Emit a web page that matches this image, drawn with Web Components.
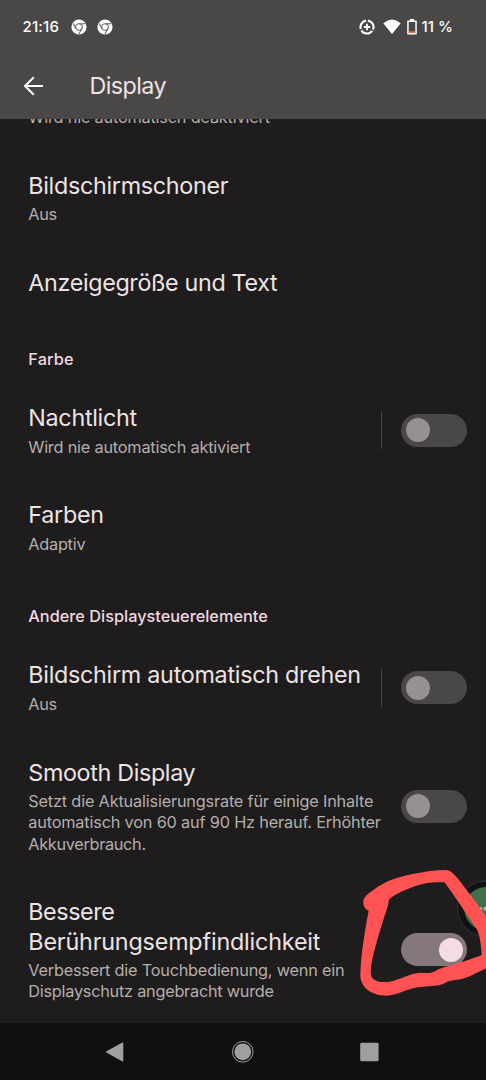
<!DOCTYPE html>
<html lang="de">
<head>
<meta charset="utf-8">
<title>Display</title>
<style>
  html, body {
    margin: 0;
    height: 100%;
    background: #1e1c1d;
  }
  body {
    font-family: Inter, Roboto, "Liberation Sans", sans-serif;
    color: #ede3e4;
    overflow: hidden;
  }
</style>
</head>
<body>

<phone-screen>
  <status-bar slot="top" time="21:16" battery="11 %"></status-bar>
  <app-bar slot="top"><text-line width="76.5">Display</text-line></app-bar>

  <setting-row>
    <text-line slot="summary" width="241.5">Wird nie automatisch deaktiviert</text-line>
  </setting-row>
  <setting-row>
    <text-line width="200">Bildschirmschoner</text-line>
    <text-line slot="summary" width="28.3">Aus</text-line>
  </setting-row>
  <setting-row>
    <text-line width="249">Anzeigegröße und Text</text-line>
  </setting-row>

  <section-title><text-line width="45.5">Farbe</text-line></section-title>
  <setting-row>
    <text-line width="108.5">Nachtlicht</text-line>
    <text-line slot="summary" width="222">Wird nie automatisch aktiviert</text-line>
    <toggle-switch slot="control" divided></toggle-switch>
  </setting-row>
  <setting-row>
    <text-line width="75.5">Farben</text-line>
    <text-line slot="summary" width="57">Adaptiv</text-line>
  </setting-row>

  <section-title><text-line width="239.5">Andere Displaysteuerelemente</text-line></section-title>
  <setting-row>
    <text-line width="332.5">Bildschirm automatisch drehen</text-line>
    <text-line slot="summary" width="28.3">Aus</text-line>
    <toggle-switch slot="control" divided></toggle-switch>
  </setting-row>
  <setting-row>
    <text-line width="167">Smooth Display</text-line>
    <text-line slot="summary" width="345">Setzt die Aktualisierungsrate für einige Inhalte</text-line>
    <text-line slot="summary" width="352.5">automatisch von 60 auf 90 Hz herauf. Erhöhter</text-line>
    <text-line slot="summary" width="117.5">Akkuverbrauch.</text-line>
    <toggle-switch slot="control"></toggle-switch>
  </setting-row>
  <setting-row>
    <text-line width="86">Bessere</text-line>
    <text-line width="292">Berührungsempfindlichkeit</text-line>
    <text-line slot="summary" width="316">Verbessert die Touchbedienung, wenn ein</text-line>
    <text-line slot="summary" width="245.5">Displayschutz angebracht wurde</text-line>
    <toggle-switch slot="control" checked></toggle-switch>
  </setting-row>

  <nav-bar slot="bottom"></nav-bar>
  <marker-drawing slot="overlay"></marker-drawing>
</phone-screen>

<script>
function shadow(el, html) {
  el.attachShadow({ mode: 'open' }).innerHTML = html;
}

class PhoneScreen extends HTMLElement {
  constructor() {
    super();
    shadow(this, `
      <style>
        :host {
          display: flex;
          flex-direction: column;
          position: relative;
          width: 486px;
          height: 1080px;
          overflow: hidden;
          background: #1e1c1d;
        }
        header { height: 119px; background: #494846; flex: none; }
        main { height: 904px; overflow: hidden; flex: none; }
        /* the list is scrolled, its first row is cut by the header */
        .list { margin-top: -37.1px; }
      </style>
      <header><slot name="top"></slot></header>
      <main><div class="list"><slot></slot></div></main>
      <slot name="bottom"></slot>
      <slot name="overlay"></slot>
    `);
  }
}

class StatusBar extends HTMLElement {
  constructor() {
    super();
    const chrome = `
      <svg width="16" height="16" viewBox="0 0 16 16">
        <circle cx="8" cy="8" r="7.6" fill="#fff"/>
        <g fill="none" stroke="#6b6a68" stroke-width="1.1">
          <circle cx="8" cy="8" r="3.3"/>
          <path d="M8 4.7H14.4M5.1 9.6L2.2 4.6M10.9 9.6L7.9 14.9"/>
        </g>
      </svg>`;
    shadow(this, `
      <style>
        :host {
          display: flex;
          align-items: center;
          height: 54px;
          padding: 0 33px 0 22.5px;
          font-size: 15px;
          font-weight: 500;
          line-height: 20px;
          color: #fff;
        }
        svg { display: block; flex: none; }
        .apps { display: flex; gap: 10px; margin-left: 11.5px; flex: 1; }
        .wifi { margin-left: 8px; }
        .battery { margin: 0 4.5px 0 6.5px; }
      </style>
      <text-line width="36.5">${this.getAttribute('time')}</text-line>
      <div class="apps">${chrome}${chrome}</div>
      <svg width="16" height="16" viewBox="0 0 16 16" fill="none" stroke="#fff">
        <path d="M8.9 1.6A6.5 6.5 0 0 1 14 10.6M13.2 11.9A6.5 6.5 0 0 1 2.4 11.4M1.8 10A6.5 6.5 0 0 1 7.1 1.6" stroke-width="2.1"/>
        <path d="M8 4.8V11.2M4.8 8H11.2" stroke-width="1.8"/>
      </svg>
      <svg class="wifi" width="18" height="16" viewBox="0 0 18 16">
        <path d="M.3 4.2Q9-3 17.7 4.2L9 15Z" fill="#fff"/>
      </svg>
      <svg class="battery" width="10" height="16" viewBox="0 0 10 16">
        <path d="M3 0H7V1.5H9Q9.8 1.5 9.8 2.3V14.7Q9.8 15.5 9 15.5H1Q.2 15.5 .2 14.7V2.3Q.2 1.5 1 1.5H3Z" fill="#fff"/>
        <path d="M1.7 3H8.3V14H1.7Z" fill="#494846"/>
        <path d="M1.7 12.3H8.3V14H1.7Z" fill="#e8714a"/>
      </svg>
      <text-line width="31.5">${this.getAttribute('battery')}</text-line>
    `);
  }
}

class AppBar extends HTMLElement {
  constructor() {
    super();
    shadow(this, `
      <style>
        :host {
          display: flex;
          align-items: center;
          gap: 45.5px;
          height: 64px;
          padding-left: 23px;
          font-size: 23.3px;
          line-height: 30px;
        }
        svg { display: block; }
      </style>
      <svg width="21" height="20" viewBox="0 0 21 20" fill="none" stroke="#fff" stroke-width="2">
        <path d="M20 10H2.5M10.8 1.2L2 10L10.8 18.8"/>
      </svg>
      <slot></slot>
    `);
  }
}

// One line of text, tracked so that it takes up the given width
class TextLine extends HTMLElement {
  constructor() {
    super();
    shadow(this, `
      <style>
        :host { display: block; white-space: nowrap; }
      </style>
      <span><slot></slot></span>
    `);
  }

  connectedCallback() {
    const natural = this.shadowRoot.querySelector('span').getBoundingClientRect().width;
    const width = Number(this.getAttribute('width'));
    this.style.letterSpacing = `${(width - natural) / this.textContent.length}px`;
  }
}

class SectionTitle extends HTMLElement {
  constructor() {
    super();
    shadow(this, `
      <style>
        :host {
          display: block;
          padding: 30px 28.3px 12px;
          font-size: 16.3px;
          font-weight: 500;
          line-height: 21px;
          color: #f0d8e0;
        }
      </style>
      <slot></slot>
    `);
  }
}

class SettingRow extends HTMLElement {
  constructor() {
    super();
    shadow(this, `
      <style>
        :host {
          display: flex;
          align-items: center;
          padding: 21.25px 19px 21.25px 28.3px;
        }
        .text { flex: 1; min-width: 0; }
        .title { font-size: 23.3px; line-height: 29.5px; }
        .summary {
          font-size: 16.3px;
          line-height: 21.2px;
          color: #b5afac;
        }
      </style>
      <div class="text">
        <div class="title"><slot></slot></div>
        <div class="summary"><slot name="summary"></slot></div>
      </div>
      <slot name="control"></slot>
    `);
    if (this.querySelector('[slot=summary]')) {
      this.shadowRoot.querySelector('.summary').style.paddingTop = '4px';
    }
  }
}

class ToggleSwitch extends HTMLElement {
  constructor() {
    super();
    shadow(this, `
      <style>
        :host { display: flex; align-items: center; gap: 19px; }
        .track {
          display: flex;
          box-sizing: border-box;
          width: 66px;
          height: 33px;
          padding: 4.5px;
          border-radius: 17px;
          background: #494846;
        }
        .knob { width: 24px; height: 24px; border-radius: 50%; background: #969091; }
        .divider { display: none; width: 1px; height: 38px; background: #494748; }
        :host([divided]) .divider { display: block; }
        :host([checked]) .track { justify-content: flex-end; background: #85787b; }
        :host([checked]) .knob { background: #f4dce4; }
      </style>
      <div class="divider"></div>
      <div class="track"><div class="knob"></div></div>
    `);
  }
}

class NavBar extends HTMLElement {
  constructor() {
    super();
    shadow(this, `
      <style>
        :host {
          display: flex;
          align-items: center;
          justify-content: space-between;
          box-sizing: border-box;
          flex: 1;
          padding: 0 106px 0 104px;
          background: #110f10;
        }
        svg { display: block; fill: #9f9f9f; overflow: visible; }
      </style>
      <svg width="22" height="22" viewBox="0 0 22 22"><path d="M2.4 10.3L18.4 1.5Q19.3 1.2 19.3 2.2V19.8Q19.3 20.8 18.4 20.4L2.4 11.6Q1.7 11 2.4 10.3Z"/></svg>
      <svg width="22" height="22" viewBox="0 0 22 22"><circle cx="11.8" cy="10.8" r="8.4"/><circle cx="11.8" cy="10.8" r="10.3" style="fill:none;stroke:#9f9f9f;stroke-width:1"/></svg>
      <svg width="22" height="22" viewBox="0 0 22 22"><rect x="2.2" y="1.8" width="18.4" height="18.4" rx="1.5"/></svg>
    `);
  }
}

// Floating button at the screen edge and the red pen stroke over it
class MarkerDrawing extends HTMLElement {
  constructor() {
    super();
    shadow(this, `
      <style>
        :host { position: absolute; right: 0; top: 860px; }
        svg { display: block; }
      </style>
      <svg width="140" height="150" viewBox="0 0 420 450">
        <circle cx="418" cy="146" r="83" fill="#101111" stroke="#2c2b2c" stroke-width="4"/>
        <circle cx="420" cy="146" r="65" fill="#41704a"/>
        <circle cx="404" cy="146" r="5" fill="#a9bcac"/>
        <circle cx="418" cy="146" r="6" fill="#a9bcac"/>
        <path fill="#ff5252" fill-rule="evenodd" d="
          M52 126C52 110 65 103 85 88C115 65 150 52 200 42C235 35 270 30 300 30C312 30 322 40 335 55
          C365 95 390 125 422 172V325C395 336 370 352 345 358C325 360 310 362 298 368
          C285 378 265 376 215 382C180 388 155 405 125 407C80 408 43 385 43 345
          C44 290 55 220 68 152C58 148 52 140 52 126Z
          M129 118C150 100 200 78 240 70C260 66 280 67 295 67C310 85 350 145 395 212
          C403 235 406 260 407 286C375 298 330 312 285 325C270 330 268 337 255 338
          C235 340 215 337 200 342C170 352 150 362 125 366C95 367 74 362 74 335
          C76 290 100 220 115 170C122 150 128 135 129 118Z"/>
      </svg>
    `);
  }
}

customElements.define('phone-screen', PhoneScreen);
customElements.define('status-bar', StatusBar);
customElements.define('app-bar', AppBar);
customElements.define('section-title', SectionTitle);
customElements.define('setting-row', SettingRow);
customElements.define('toggle-switch', ToggleSwitch);
customElements.define('nav-bar', NavBar);
customElements.define('marker-drawing', MarkerDrawing);
// last, so that the lines are measured in their final fonts
customElements.define('text-line', TextLine);
</script>
</body>
</html>
